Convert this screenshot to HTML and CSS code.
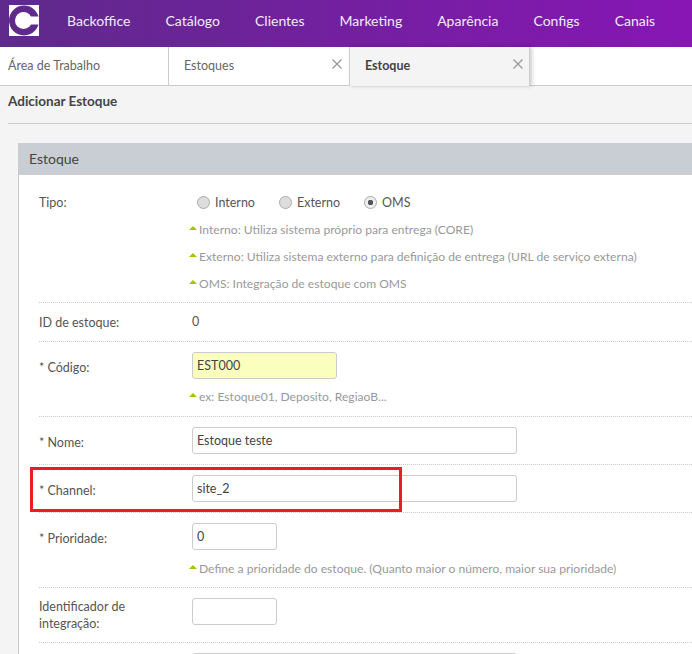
FILE: index.html
```html
<!DOCTYPE html>
<html lang="pt-BR">
<head>
    <meta charset="UTF-8">
    <meta name="viewport" content="width=device-width, initial-scale=1.0">
    <title>Adicionar Estoque</title>
    <link rel="stylesheet" href="styles.css">
</head>
<body>
    <!-- Top menu -->
    <header class="topbar">
        <svg class="logo" width="30" height="31" viewBox="0 0 30 31">
            <rect fill="#fff" width="30" height="31"/>
            <circle fill="#5f2a8c" cx="15" cy="15.500" r="15"/>
            <circle fill="#fff" cx="14.500" cy="15.500" r="8.500"/>
            <rect fill="#fff" x="14" y="11.500" width="16" height="8"/>
        </svg>
        <nav class="menu">
            <a>Backoffice</a>
            <a>Catálogo</a>
            <a>Clientes</a>
            <a>Marketing</a>
            <a>Aparência</a>
            <a>Configs</a>
            <a>Canais</a>
        </nav>
    </header>

    <!-- Open tabs -->
    <div class="tabs">
        <div class="tab tab-home">Área de Trabalho</div>
        <div class="tab tab-list">Estoques
            <svg class="close" width="10" height="10" viewBox="0 0 10 10"><path d="M0.500 0.500L9.500 9.500M9.500 0.500L0.500 9.500"/></svg>
        </div>
        <div class="tab tab-active">Estoque
            <svg class="close" width="10" height="10" viewBox="0 0 10 10"><path d="M0.500 0.500L9.500 9.500M9.500 0.500L0.500 9.500"/></svg>
        </div>
    </div>

    <main class="content">
        <h1 class="page-title">Adicionar Estoque</h1>

        <section class="panel">
            <h2 class="panel-title">Estoque</h2>
            <div class="panel-body">
                <div class="row row-tipo">
                    <label class="row-label">Tipo:</label>
                    <div class="row-field">
                        <div class="radios">
                            <span class="radio"><i></i>Interno</span>
                            <span class="radio"><i></i>Externo</span>
                            <span class="radio checked"><i></i>OMS</span>
                        </div>
                        <p class="hint">Interno: Utiliza sistema próprio para entrega (CORE)</p>
                        <p class="hint">Externo: Utiliza sistema externo para definição de entrega (URL de serviço externa)</p>
                        <p class="hint">OMS: Integração de estoque com OMS</p>
                    </div>
                </div>

                <div class="row row-id">
                    <label class="row-label">ID de estoque:</label>
                    <div class="row-field">0</div>
                </div>

                <div class="row row-codigo">
                    <label class="row-label">* Código:</label>
                    <div class="row-field">
                        <input class="input input-code" type="text" value="EST000">
                        <p class="hint">ex: Estoque01, Deposito, RegiaoB...</p>
                    </div>
                </div>

                <div class="row row-plain">
                    <label class="row-label">* Nome:</label>
                    <div class="row-field"><input class="input input-long" type="text" value="Estoque teste"></div>
                </div>

                <div class="row row-plain">
                    <label class="row-label">* Channel:</label>
                    <div class="row-field"><input class="input input-long" type="text" value="site_2"></div>
                </div>

                <div class="row row-prioridade">
                    <label class="row-label">* Prioridade:</label>
                    <div class="row-field">
                        <input class="input input-short" type="text" value="0">
                        <p class="hint">Define a prioridade do estoque. (Quanto maior o número, maior sua prioridade)</p>
                    </div>
                </div>

                <div class="row row-integracao">
                    <label class="row-label">Identificador de integração:</label>
                    <div class="row-field"><input class="input input-short" type="text"></div>
                </div>

                <div class="row row-last">
                    <div class="row-label"></div>
                    <div class="row-field"><input class="input input-long" type="text"></div>
                </div>
            </div>
        </section>
    </main>

    <!-- Red highlight drawn over the screenshot -->
    <div class="highlight"></div>
</body>
</html>
```

FILE: styles.css
```css
html, body {
    height: 100%;
}

body {
    margin: 0;
    height: 654px;
    overflow: hidden;
    position: relative;
    background-color: #f4f4f4;
    font-family: 'Lato', 'Noto Sans', sans-serif;
    font-size: 13px;
    color: #555;
}

/* Top menu */
.topbar {
    display: flex;
    align-items: center;
    height: 47px;
    padding-left: 9px;
    background: linear-gradient(to right, #5f2a8c, #8716b4);
}

.logo {
    flex: none;
    margin-top: -7px;
}

.menu {
    display: flex;
    margin-left: 28px;
    margin-top: -6px;
    gap: 35px;
    color: #f3eaf8;
    font-size: 14px;
    white-space: nowrap;
}

/* Tabs */
.tabs {
    display: flex;
    box-sizing: border-box;
    height: 39px;
    background-color: #fff;
    border-bottom: 1px solid #ccc;
}

.tab {
    position: relative;
    box-sizing: border-box;
    height: 38px;
    line-height: 37px;
    font-size: 12.500px;
    color: #666;
}

.tab-home {
    width: 169px;
    padding-left: 8px;
    border-right: 1px solid #ccc;
}

.tab-list {
    width: 180px;
    padding-left: 15px;
}

.tab-active {
    width: 181px;
    height: 39px;
    padding-left: 15px;
    background-color: #f4f4f4;
    border-left: 1px solid #ccc;
    border-right: 1px solid #ccc;
    box-shadow: 2px 0 4px rgba(0, 0, 0, 0.2);
    font-weight: bold;
    color: #444;
}

.close {
    position: absolute;
    top: 12px;
    right: 7px;
    fill: none;
    stroke: #999;
    stroke-width: 1.300;
}

.tab-active .close {
    right: 6px;
}

/* Page */
.content {
    padding: 0 0 0 8px;
    margin-top: -1px;
}

.page-title {
    margin: 0;
    height: 38px;
    line-height: 32px;
    border-bottom: 1px solid #ccc;
    font-size: 13.500px;
    font-weight: bold;
    color: #444;
}

.panel {
    margin: 19px 0 0 10px;
    background-color: #fff;
    border-left: 1px solid #ccc;
}

.panel-title {
    margin: 0;
    height: 32px;
    padding-left: 10px;
    line-height: 31px;
    background-color: #c8ced4;
    font-size: 14px;
    font-weight: normal;
    color: #444;
}

.panel-body {
    padding-left: 20px;
}

.row {
    display: flex;
    box-sizing: border-box;
    border-bottom: 1px dotted #ccc;
}

.row-label {
    flex: none;
    width: 120px;
    margin-right: 33px;
    font-size: 12.500px;
    line-height: 17px;
}

.row-field {
    flex: 1;
    font-size: 12.500px;
}

.row-tipo {
    height: 128px;
    padding-top: 19px;
}

.row-id {
    height: 39px;
    padding-top: 11px;
}

.row-codigo {
    height: 75px;
    padding-top: 10px;
}

.row-codigo .row-label,
.row-plain .row-label,
.row-prioridade .row-label {
    padding-top: 7px;
}

.row-codigo .hint {
    margin-top: 9px;
}

.row-plain {
    height: 48px;
    padding-top: 10px;
}

.row-prioridade {
    height: 75px;
    padding-top: 10px;
}

.row-integracao {
    height: 55px;
    padding-top: 10px;
}

.row-last {
    padding-top: 10px;
    border-bottom: none;
}

.radios {
    display: flex;
    gap: 24px;
    line-height: 17px;
    margin-left: 5px;
}

.radio i {
    display: inline-block;
    width: 11px;
    height: 11px;
    margin-right: 5px;
    vertical-align: -2px;
    border: 1px solid #aaa;
    border-radius: 50%;
    background-color: #ddd;
}

.radio.checked i {
    background: radial-gradient(circle, #555 0, #555 2.500px, #eee 3px);
}

.hint {
    position: relative;
    margin: 10px 0 0;
    padding-left: 7px;
    line-height: 17px;
    font-size: 12.100px;
    color: #999;
    white-space: nowrap;
}

.hint::before {
    content: "";
    position: absolute;
    left: -3px;
    top: 5px;
    border-left: 4px solid transparent;
    border-right: 4px solid transparent;
    border-bottom: 4px solid #a4c400;
}

.input {
    display: block;
    box-sizing: border-box;
    height: 27px;
    padding: 0 4px;
    border: 1px solid #ccc;
    border-radius: 3px;
    background-color: #fff;
    font-family: inherit;
    font-size: 12.500px;
    color: #444;
}

.input-code {
    width: 145px;
    background-color: #fbffbd;
}

.input-long {
    width: 325px;
}

.input-short {
    width: 85px;
}

.highlight {
    position: absolute;
    left: 30px;
    top: 467px;
    width: 366px;
    height: 39px;
    border: 3px solid #ed1c24;
}
```
